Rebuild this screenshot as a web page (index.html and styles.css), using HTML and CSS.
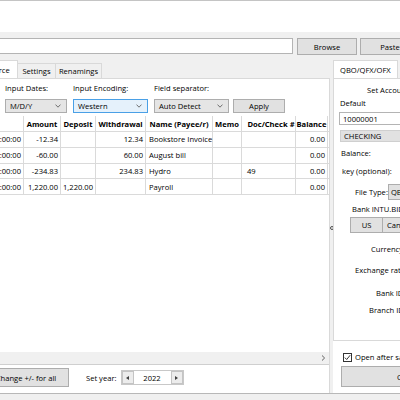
FILE: index.html
```html
<!DOCTYPE html>
<html>
<head>
<meta charset="utf-8">
<link rel="stylesheet" href="styles.css">
</head>
<body>
<div class="titlebar"></div>
<div class="window">
  <div class="pathrow">
    <div class="pathinput"></div>
    <div class="btn browse">Browse</div>
    <div class="btn paste">Paste</div>
  </div>
  <div class="main">
    <div class="leftpane">
      <div class="tabs">
        <div class="tab sel src">Source</div>
        <div class="tab t-settings">Settings</div>
        <div class="tab t-ren">Renamings</div>
      </div>
      <div class="panel">
        <div class="options">
          <div class="opt o-dates">
            <div class="lbl">Input Dates:</div>
            <div class="combo"><span>M/D/Y</span><svg width="6" height="4" viewBox="0 0 6 4"><path d="M0.5 0.6 L3 3.2 L5.5 0.6" fill="none" stroke="#606060" stroke-width="0.9"/></svg></div>
          </div>
          <div class="opt o-enc">
            <div class="lbl">Input Encoding:</div>
            <div class="combo focus"><span>Western</span><svg width="6" height="4" viewBox="0 0 6 4"><path d="M0.5 0.6 L3 3.2 L5.5 0.6" fill="none" stroke="#606060" stroke-width="0.9"/></svg></div>
          </div>
          <div class="opt o-sep">
            <div class="lbl">Field separator:</div>
            <div class="combo"><span>Auto Detect</span><svg width="6" height="4" viewBox="0 0 6 4"><path d="M0.5 0.6 L3 3.2 L5.5 0.6" fill="none" stroke="#606060" stroke-width="0.9"/></svg></div>
          </div>
          <div class="btn apply">Apply</div>
        </div>
        <div class="grid">
          <div class="row head">
            <div class="c c0"></div>
            <div class="c c1">Amount</div>
            <div class="c c2">Deposit</div>
            <div class="c c3">Withdrawal</div>
            <div class="c c4">Name (Payee/r)</div>
            <div class="c c5">Memo</div>
            <div class="c c6">Doc/Check #</div>
            <div class="c c7">Balance</div>
          </div>
          <div class="row">
            <div class="c c0 num">2022-01-03 00:00:00</div>
            <div class="c c1 num">-12.34</div>
            <div class="c c2 num"></div>
            <div class="c c3 num">12.34</div>
            <div class="c c4">Bookstore Invoice</div>
            <div class="c c5"></div>
            <div class="c c6"></div>
            <div class="c c7 num">0.00</div>
          </div>
          <div class="row">
            <div class="c c0 num">2022-01-05 00:00:00</div>
            <div class="c c1 num">-60.00</div>
            <div class="c c2 num"></div>
            <div class="c c3 num">60.00</div>
            <div class="c c4">August bill</div>
            <div class="c c5"></div>
            <div class="c c6"></div>
            <div class="c c7 num">0.00</div>
          </div>
          <div class="row">
            <div class="c c0 num">2022-01-08 00:00:00</div>
            <div class="c c1 num">-234.83</div>
            <div class="c c2 num"></div>
            <div class="c c3 num">234.83</div>
            <div class="c c4">Hydro</div>
            <div class="c c5"></div>
            <div class="c c6">49</div>
            <div class="c c7 num">0.00</div>
          </div>
          <div class="row">
            <div class="c c0 num">2022-01-13 00:00:00</div>
            <div class="c c1 num">1,220.00</div>
            <div class="c c2 num">1,220.00</div>
            <div class="c c3 num"></div>
            <div class="c c4">Payroll</div>
            <div class="c c5"></div>
            <div class="c c6"></div>
            <div class="c c7 num">0.00</div>
          </div>
        </div>
        <div class="hscroll">
          <svg width="5" height="6" viewBox="0 0 5 6"><path d="M1 0.5 L3.6 3 L1 5.5" fill="none" stroke="#606060" stroke-width="1"/></svg>
        </div>
        <div class="bottombar">
          <div class="btn change">Change +/- for all</div>
          <div class="yearlbl">Set year:</div>
          <div class="spin">
            <div class="sbtn"><svg width="3" height="4" viewBox="0 0 3 4"><path d="M3 0 L0 2 L3 4Z" fill="#404040"/></svg></div>
            <div class="sval">2022</div>
            <div class="sbtn"><svg width="3" height="4" viewBox="0 0 3 4"><path d="M0 0 L3 2 L0 4Z" fill="#404040"/></svg></div>
          </div>
        </div>
      </div>
    </div>
    <div class="splitter"><span class="dot"></span></div>
    <div class="rightpane">
      <div class="tabs">
        <div class="tab sel qbo">QBO/QFX/OFX</div>
      </div>
      <div class="rpanel">
        <div class="rl r-title">Set Account Info</div>
        <div class="rl r-default">Default</div>
        <div class="rinput">10000001</div>
        <div class="rcombo">CHECKING</div>
        <div class="rl r-bal">Balance:</div>
        <div class="rl r-key">key (optional):</div>
        <div class="r-ft">
          <div class="rl ft-lbl">File Type:</div>
          <div class="ft-combo">QBO</div>
        </div>
        <div class="rl r-bank">Bank INTU.BID:</div>
        <div class="r-cty">
          <div class="btn cty-us">US</div>
          <div class="btn cty-can">Canada</div>
        </div>
        <div class="rl r-cur">Currency:</div>
        <div class="rl r-exch">Exchange rate:</div>
        <div class="rl r-bid">Bank ID:</div>
        <div class="rl r-brid">Branch ID:</div>
      </div>
      <div class="rbottom">
        <div class="chkrow">
          <span class="chk"><svg width="7" height="7" viewBox="0 0 7 7"><path d="M0.8 3.6 L2.7 5.5 L6.2 1.2" fill="none" stroke="#222" stroke-width="0.9"/></svg></span>
          <span>Open after saving</span>
        </div>
        <div class="btn convert">Convert</div>
      </div>
    </div>
  </div>
  <div class="statusline"></div>
</div>
</body>
</html>
```

FILE: styles.css
```css
* { box-sizing: border-box; margin: 0; padding: 0; }
html, body { width: 400px; height: 400px; overflow: hidden; }
body {
  font-family: "Open Sans", "Noto Sans", sans-serif;
  font-size: 7.6px;
  line-height: 10px;
  color: #000;
  background: #f0f0f0;
}
.titlebar { height: 32px; background: #fff; border-top: 1px solid #c4c4c4; }
.window { height: 368px; background: #f0f0f0; }

.pathrow { display: flex; padding-top: 6px; height: 26px; }
.pathinput { flex: none; width: 301px; margin-left: -8px; height: 16px; background: #fff; border: 1px solid #b4b4b4; }
.btn {
  flex: none;
  background: #e1e1e1;
  border: 1px solid #adadad;
  display: flex; align-items: center; justify-content: center;
  white-space: nowrap;
}
.browse { width: 60px; height: 17px; margin-left: 4px; }
.paste { width: 60px; height: 17px; margin-left: 3px; }

.main { display: flex; height: 335px; }
.leftpane { flex: none; width: 330px; display: flex; flex-direction: column; }
.tabs { flex: none; height: 20px; display: flex; align-items: flex-end; }
.tab {
  flex: none;
  height: 15px;
  border: 1px solid #d9d9d9; border-bottom: none;
  background: #f0f0f0;
  display: flex; align-items: center; justify-content: center;
  white-space: nowrap;
}
.tab.sel { height: 18px; background: #fff; }
.src { width: 41px; margin-left: -23px; }
.t-settings { width: 39px; margin-left: -1px; }
.t-ren { width: 47px; margin-left: -1px; }

.panel {
  flex: 1;
  background: #fff;
  border-top: 1px solid #d9d9d9;
  border-right: 1px solid #d9d9d9;
  display: flex; flex-direction: column;
}
.options { flex: none; height: 37px; display: flex; align-items: flex-start; padding: 4px 0 0 5px; }
.opt { flex: none; display: flex; flex-direction: column; }
.lbl { height: 10px; margin-bottom: 6px; white-space: nowrap; }
.combo {
  height: 14px;
  background: #e5e5e5;
  border: 1px solid #adadad;
  display: flex; align-items: center; justify-content: space-between;
  padding: 0 5px 0 4px;
}
.combo.focus { background: #e5f1fb; border-color: #4aa0e6; }
.o-dates { width: 62px; }
.o-enc { width: 75px; margin-left: 6px; }
.o-sep { width: 75px; margin-left: 6px; }
.apply { width: 52px; height: 14px; margin-left: 4px; margin-top: 16px; }

.grid { flex: none; height: 236px; }
.row { display: flex; height: 15.75px; border-bottom: 1px solid #dadada; }
.row.head { height: 16px; font-weight: 700; }
.c {
  flex: none;
  display: flex; align-items: center;
  border-right: 1px solid #dadada;
  padding: 0 3px;
  white-space: nowrap;
  overflow: visible;
}
.head .c { justify-content: center; padding: 0; }
.c.num { justify-content: flex-end; padding: 0 2px 0 0; }
.c0 { width: 24px; }
.c1 { width: 37px; }
.c2 { width: 35px; }
.c3 { width: 50px; }
.c4 { width: 67px; }
.c5 { width: 29px; }
.c6 { width: 54px; }
.c7 { width: 32px; }
.c6:not(.num) { padding-left: 5px; }

.hscroll { flex: none; height: 12px; background: #f0f0f0; display: flex; align-items: center; justify-content: flex-end; padding-right: 3px; }
.bottombar { flex: 1; border-top: 1px solid #cfcfcf; display: flex; align-items: center; padding-bottom: 3px; }
.change { width: 86px; height: 19px; margin-left: -17px; }
.yearlbl { margin-left: 17px; white-space: nowrap; }
.spin {
  flex: none;
  width: 63px; height: 15px;
  margin-left: 4px;
  border: 1px solid #c8c8c8;
  background: #fff;
  display: flex; align-items: stretch;
}
.sbtn { flex: none; width: 12px; background: #ececec; border: 1px solid #c4c4c4; display: flex; align-items: center; justify-content: center; }
.sval { flex: 1; display: flex; align-items: center; justify-content: center; }

.splitter { flex: none; width: 3px; display: flex; justify-content: center; }
.dot { flex: none; width: 4px; height: 4px; border: 1px solid #505050; border-radius: 50%; margin-top: 168px; }

.rightpane { flex: none; width: 90px; display: flex; flex-direction: column; background: #fff; }
.rightpane .tabs { background: #f0f0f0; }
.qbo { width: 65px; justify-content: flex-start; padding-left: 6px; }
.rpanel {
  flex: none; height: 263px;
  background: #fff;
  border: 1px solid #d9d9d9; border-right: none;
}
.rl { height: 10px; white-space: nowrap; }
.r-title { margin-top: 6px; padding-left: 33px; }
.r-default { margin-top: 3px; padding-left: 6px; }
.rinput { margin: 4px 0 0 5px; height: 13px; border: 1px solid #b4b4b4; padding-left: 3px; display: flex; align-items: center; white-space: nowrap; }
.rcombo { margin: 5px 0 0 6px; height: 12px; background: #e1e1e1; border: 1px solid #cfcfcf; padding-left: 3px; display: flex; align-items: center; white-space: nowrap; }
.r-bal { margin-top: 6px; padding-left: 7px; }
.r-key { margin-top: 8px; padding-left: 8px; }
.r-ft { margin-top: 8px; display: flex; align-items: center; height: 16px; padding-left: 21px; }
.ft-lbl { width: 37px; height: 10px; }
.ft-combo { flex: none; width: 50px; height: 16px; background: #e1e1e1; border: 1px solid #adadad; padding-left: 2px; display: flex; align-items: center; }
.r-bank { margin-top: 4px; padding-left: 18px; }
.r-cty { margin: 3px 0 0 16px; display: flex; height: 16px; }
.cty-us { width: 33px; height: 16px; }
.cty-can { width: 40px; height: 16px; margin-left: -1px; justify-content: flex-start; padding-left: 4px; }
.r-cur { margin-top: 11px; padding-left: 37px; }
.r-exch { margin-top: 11px; padding-left: 21px; }
.r-bid { margin-top: 13px; padding-left: 42px; }
.r-brid { margin-top: 7px; padding-left: 35px; }

.rbottom { flex: 1; background: #fff; }
.chkrow { margin-top: 11px; padding-left: 10px; display: flex; align-items: center; height: 10px; white-space: nowrap; }
.chk { flex: none; width: 9px; height: 9px; border: 1px solid #333; background: #fff; margin-right: 3px; display: flex; align-items: center; justify-content: center; }
.convert { width: 140px; height: 21px; margin: 4px 0 0 8px; }

.statusline { height: 7px; border-top: 1px solid #b8b8b8; background: #f0f0f0; }
```
